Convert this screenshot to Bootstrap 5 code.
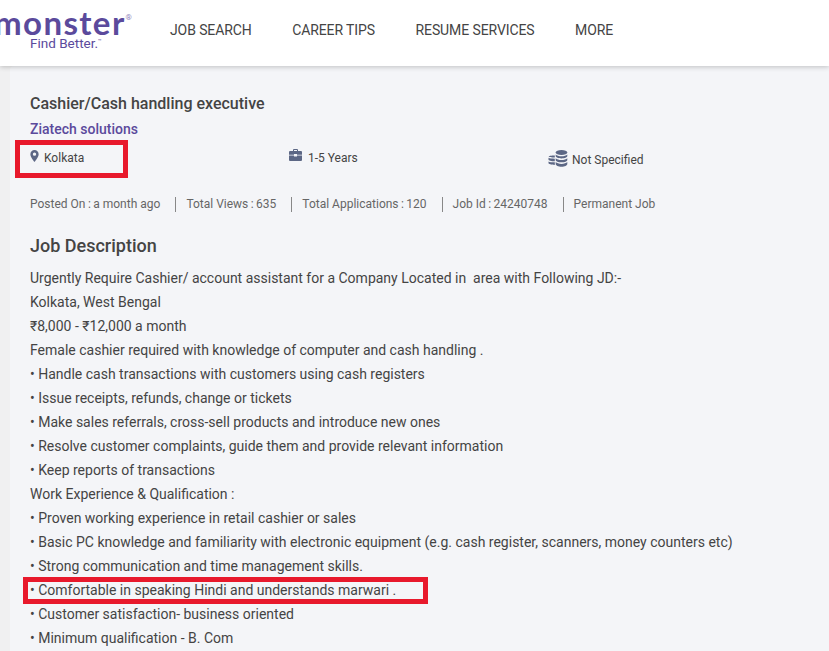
<!DOCTYPE html>
<html>
<head>
    <title>Cashier/Cash handling executive</title>
    <link rel="stylesheet" href="https://cdn.jsdelivr.net/npm/bootstrap@5.3.0/dist/css/bootstrap.min.css">
    <style>
        html, body {
            height: 651px;
            overflow: hidden;
        }
        body {
            font-family: Roboto, sans-serif;
            background-color: #f0f0f1;
            color: #444;
            position: relative;
        }
        .site-head {
            height: 66px;
            background-color: #fff;
            box-shadow: 0 1px 5px rgba(0, 0, 0, .22);
            position: relative;
            z-index: 2;
        }
        .logo-box {
            width: 170px;
            flex-shrink: 0;
            padding-top: 3px;
            color: #5b4a9c;
            overflow: hidden;
        }
        .logo-word {
            font-family: Lato, sans-serif;
            font-size: 33px;
            font-weight: 700;
            line-height: 29px;
            letter-spacing: 1.4px;
            margin-left: -6px;
            white-space: nowrap;
        }
        .logo-reg {
            font-size: 8px;
            vertical-align: 15px;
            font-family: Roboto, sans-serif;
            font-weight: 400;
            letter-spacing: 0;
            margin-left: 0;
            color: #9087bd;
        }
        .logo-tag {
            font-size: 13.5px;
            line-height: 13px;
            margin-left: 30px;
            font-weight: 400;
        }
        .logo-tag sup {
            font-size: 6px;
            top: -5px;
        }
        .head-links {
            font-size: 14px;
            color: #444;
            gap: 40.5px;
            padding-top: 22px;
            line-height: 17px;
            letter-spacing: -.1px;
        }
        .job-panel {
            margin-left: 10px;
            height: 585px;
            padding: 28px 0 0 20px;
            background-color: #f4f5f8;
            border-top-left-radius: 4px;
        }
        .job-title {
            font-size: 16px;
            font-weight: 500;
            line-height: 19px;
            color: #444;
            margin-bottom: 4px;
        }
        .company-link {
            font-size: 14px;
            font-weight: 500;
            line-height: 17px;
            color: #5b4a9c;
            text-decoration: none;
        }
        .facts-row {
            font-size: 12px;
            color: #444;
            height: 30px;
            margin-top: 4px;
        }
        .fact-one {
            width: 259px;
            gap: 5px;
        }
        .fact-one svg {
            margin-top: 1px;
        }
        .fact-two {
            width: 259px;
            gap: 6px;
        }
        .fact-three {
            padding-top: 5px;
        }
        .fact-three span {
            margin-top: 1px;
        }
        .fact-icon {
            fill: #5c6785;
            flex-shrink: 0;
        }
        .stats-row {
            font-size: 12px;
            color: #666;
            line-height: 15px;
            margin-top: 22px;
        }
        .stats-row span + span {
            border-left: 1px solid #888;
            margin-left: 15px;
            padding-left: 10px;
        }
        .desc-title {
            font-size: 18px;
            font-weight: 500;
            line-height: 21px;
            color: #444;
            margin: 23px 0 10px;
        }
        .desc-lines {
            font-size: 14px;
            line-height: 24px;
            color: #444;
        }
        .red-mark {
            position: absolute;
            border: 5px solid #e8192c;
            z-index: 3;
        }
        .mark-place {
            left: 15px;
            top: 140px;
            width: 113px;
            height: 38px;
        }
        .mark-line {
            left: 23px;
            top: 577px;
            width: 405px;
            height: 27px;
        }
    </style>
</head>
<body>
    <header class="site-head d-flex">
        <div class="logo-box">
            <div class="logo-word">monster<span class="logo-reg">®</span></div>
            <div class="logo-tag">Find Better.<sup>™</sup></div>
        </div>
        <nav class="head-links d-flex">
            <span>JOB SEARCH</span>
            <span>CAREER TIPS</span>
            <span>RESUME SERVICES</span>
            <span>MORE</span>
        </nav>
    </header>

    <main class="job-panel">
        <h1 class="job-title">Cashier/Cash handling executive</h1>
        <a class="company-link" href="#">Ziatech solutions</a>

        <div class="facts-row d-flex">
            <div class="fact-one d-flex align-items-start pt-1">
                <svg class="fact-icon" width="9" height="12" viewBox="0 0 9 13"><path fill-rule="evenodd" d="M4.500 0C2 0 0 2 0 4.500 0 7.500 4.500 13 4.500 13S9 7.500 9 4.500C9 2 7 0 4.500 0zm0 6.300a1.800 1.800 0 1 1 0-3.600 1.800 1.800 0 0 1 0 3.600z"/></svg>
                <span>Kolkata</span>
            </div>
            <div class="fact-two d-flex align-items-start pt-1">
                <svg class="fact-icon" width="13" height="12" viewBox="0 0 13 12"><path d="M4 2V1a1 1 0 0 1 1-1h3a1 1 0 0 1 1 1v1h3a1 1 0 0 1 1 1v2.700H8V5H5v.7H0V3a1 1 0 0 1 1-1h3zm1 0h3V1H5v1zM0 6.600h5v1h3v-1h5V11a1 1 0 0 1-1 1H1a1 1 0 0 1-1-1V6.600z"/></svg>
                <span>1-5 Years</span>
            </div>
            <div class="fact-three d-flex align-items-start gap-1">
                <svg class="fact-icon" width="20" height="17" viewBox="0 0 20 17"><ellipse cx="13.500" cy="2.500" rx="5.800" ry="2.500"/><path d="M7.700 4.500c1 1.200 3.300 1.800 5.800 1.800s4.800-.6 5.800-1.800v1.600c0 1.300-2.600 2.400-5.800 2.400s-5.800-1.100-5.800-2.400zM7.700 8.300c1 1.200 3.300 1.800 5.800 1.800s4.800-.6 5.800-1.800v1.600c0 1.300-2.600 2.400-5.800 2.400s-5.800-1.100-5.800-2.400zM7.700 12.100c1 1.200 3.300 1.800 5.800 1.800s4.800-.6 5.800-1.800v1.900c0 1.500-2.600 2.700-5.800 2.700s-5.800-1.200-5.800-2.700zM6.800 5.400v2.200c-3.400-.1-6.300-.6-6.300-1.100 0-.6 2.900-1.100 6.300-1.100zM6.800 8.700v2.600C3.300 11.200.5 10.500.5 9.400V7.800c1.100.6 3.400.9 6.300.9zM6.800 12.300v2.600c-3.500-.1-6.300-.8-6.300-1.900v-1.600c1.100.6 3.400.9 6.300.9z"/></svg>
                <span>Not Specified</span>
            </div>
        </div>

        <div class="stats-row d-flex">
            <span>Posted On&thinsp;:&thinsp;a month ago</span>
            <span>Total Views&thinsp;:&thinsp;635</span>
            <span>Total Applications&thinsp;:&thinsp;120</span>
            <span>Job Id&thinsp;:&thinsp;24240748</span>
            <span>Permanent Job</span>
        </div>

        <h2 class="desc-title">Job Description</h2>
        <div class="desc-lines">
            <div>Urgently Require Cashier/ account assistant for a Company Located in&nbsp; area with Following JD:-</div>
            <div>Kolkata, West Bengal</div>
            <div>₹8,000 - ₹12,000 a month</div>
            <div>Female cashier required with knowledge of computer and cash handling .</div>
            <div>• Handle cash transactions with customers using cash registers</div>
            <div>• Issue receipts, refunds, change or tickets</div>
            <div>• Make sales referrals, cross-sell products and introduce new ones</div>
            <div>• Resolve customer complaints, guide them and provide relevant information</div>
            <div>• Keep reports of transactions</div>
            <div>Work Experience &amp; Qualification :</div>
            <div>• Proven working experience in retail cashier or sales</div>
            <div>• Basic PC knowledge and familiarity with electronic equipment (e.g. cash register, scanners, money counters etc)</div>
            <div>• Strong communication and time management skills.</div>
            <div>• Comfortable in speaking Hindi and understands marwari .</div>
            <div>• Customer satisfaction- business oriented</div>
            <div>• Minimum qualification - B. Com</div>
        </div>
    </main>

    <div class="red-mark mark-place"></div>
    <div class="red-mark mark-line"></div>

    <script src="https://cdn.jsdelivr.net/npm/bootstrap@5.3.0/dist/js/bootstrap.bundle.min.js"></script>
</body>
</html>
